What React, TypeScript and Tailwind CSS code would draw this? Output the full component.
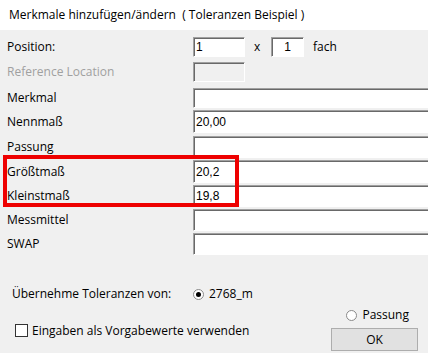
import React from "react";

const UI = { fontFamily: '"Open Sans", "Noto Sans", sans-serif' };
const ARIAL = { fontFamily: '"Liberation Sans", Arial, sans-serif' };

function Box({ w, h, children, disabled, center }: { w?: number; h: number; children?: React.ReactNode; disabled?: boolean; center?: boolean }) {
  return (
    <div
      className={`shrink-0 flex items-center border border-t-[#a0a0a0] border-l-[#a0a0a0] border-r-white border-b-white shadow-[inset_1px_1px_0_#696969] text-[12px] text-black px-[2px] ${disabled ? "bg-[#f0f0f0]" : "bg-white"} ${center ? "justify-center" : ""}`}
      style={{ ...ARIAL, width: w ?? 260, height: h }}
    >
      {children}
    </div>
  );
}

function Row({ label, top, h, value }: { label: string; top: number; h: number; value?: string }) {
  return (
    <div className="flex items-center" style={{ marginTop: top, height: h }}>
      <div className="shrink-0 w-[193px] pl-[7px] text-[12px] text-black" style={UI}>
        {label}
      </div>
      <Box h={h}>{value}</Box>
    </div>
  );
}

export default function App() {
  return (
    <div className="relative w-[428px] h-[353px] overflow-hidden bg-[#f0f0f0]" style={UI}>
      <div className="h-[30px] bg-white flex items-center pl-[9px] text-[12px] text-black whitespace-pre">
        Merkmale hinzufügen/ändern  ( Toleranzen Beispiel )
      </div>
      <div className="flex items-center mt-[7px] h-[20px]">
        <div className="shrink-0 w-[193px] pl-[7px] text-[12px]">Position:</div>
        <Box w={52} h={20}>1</Box>
        <span className="ml-[9px] w-[17px] text-[12px]">x</span>
        <Box w={33} h={20} center>1</Box>
        <span className="ml-[9px] text-[12px]">fach</span>
      </div>
      <div className="flex items-center mt-[5px] h-[20px]">
        <div className="shrink-0 w-[193px] pl-[7px] text-[12px] text-[#a0a0a0]">Reference Location</div>
        <Box w={52} h={20} disabled />
      </div>
      <Row label="Merkmal" top={6} h={20} />
      <Row label="Nennmaß" top={2} h={23} value="20,00" />
      <Row label="Passung" top={3} h={22} />
      <Row label="Größtmaß" top={2} h={23} value="20,2" />
      <Row label="Kleinstmaß" top={2} h={22} value="19,8" />
      <Row label="Messmittel" top={2} h={22} />
      <Row label="SWAP" top={2} h={22} />

      <div className="flex items-center mt-[32px] h-[14px] text-[12px]">
        <span className="shrink-0 pl-[12px] w-[193px]">Übernehme Toleranzen von:</span>
        <span className="w-[11px] h-[11px] rounded-full border border-[#8a8a8a] bg-white flex items-center justify-center">
          <span className="w-[5px] h-[5px] rounded-full bg-black" />
        </span>
        <span className="ml-[5px]">2768_m</span>
      </div>
      <div className="flex items-center justify-end mt-[7px] h-[14px] text-[12px] pr-[19px]">
        <span className="w-[11px] h-[11px] rounded-full border border-[#8a8a8a] bg-white" />
        <span className="ml-[5px]">Passung</span>
      </div>
      <div className="flex items-start mt-[6px]">
        <div className="shrink-0 flex items-center pl-[15px] mt-[-9px] h-[23px] w-[331px]">
          <span className="w-[13px] h-[13px] border border-[#333] bg-white" />
          <span className="ml-[4px] text-[12px]">Eingaben als Vorgabewerte verwenden</span>
        </div>
        <div className="shrink-0 w-[87px] h-[23px] border border-[#adadad] bg-[#e1e1e1] flex items-center justify-center text-[12px]">
          OK
        </div>
      </div>

      <div className="absolute left-[3px] top-[155px] w-[236px] h-[52px] border-4 border-[#ee0000]" />
    </div>
  );
}
